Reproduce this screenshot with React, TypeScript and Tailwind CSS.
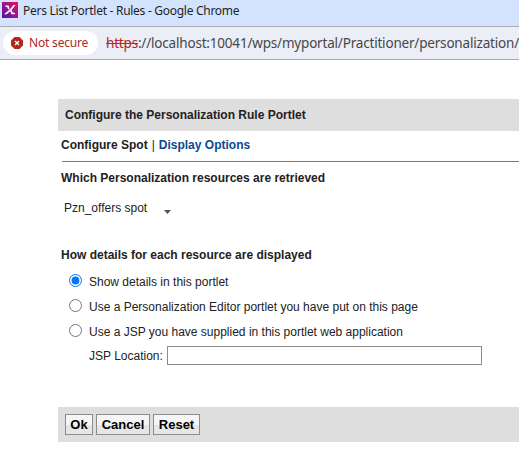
import { useState } from "react";

const displayModes = [
  "Show details in this portlet",
  "Use a Personalization Editor portlet you have put on this page",
  "Use a JSP you have supplied in this portlet web application",
];

function Favicon() {
  return (
    <svg width="16" height="16" viewBox="0 0 16 16" className="shrink-0">
      <defs>
        <linearGradient id="brand" x1="0" y1="1" x2="1" y2="0">
          <stop offset="0" stopColor="#4b15a8" />
          <stop offset="0.5" stopColor="#9a1494" />
          <stop offset="1" stopColor="#f50a55" />
        </linearGradient>
      </defs>
      <rect width="16" height="16" fill="url(#brand)" />
      <path d="M3.5 3.5h3l1.2 3.2-1.5.8-1-2.5H3.5z" fill="#fff" />
      <path d="M13.5 3h-2L7.8 7.4 2 12.2h2.6L9.4 8.2z" fill="#fff" />
      <path d="M8.2 9.2l1.4-1.1 1.2 2.6H13v1.5H9.6z" fill="#fff" />
    </svg>
  );
}

function BrowserChrome() {
  return (
    <header className="font-['Noto_Sans','Open_Sans',sans-serif]">
      <div className="flex h-[27px] items-start gap-[5px] border-b border-[#ababae] bg-[#d3e3fd] pl-0.5 pt-0.5 text-[12px] text-[#1f1f1f]">
        <Favicon />
        <span className="whitespace-nowrap leading-[18px] tracking-[-0.28px]">Pers List Portlet - Rules - Google Chrome</span>
      </div>
      <div className="flex h-[33px] items-center border-b border-[#ababae] bg-[#ebeef7] pl-[3px]">
        <div className="flex h-6 w-[95px] shrink-0 items-center rounded-full bg-white pl-2 text-[12px] text-[#b3261e]">
          <svg width="12" height="12" viewBox="0 0 12 12" className="mr-[6px] shrink-0">
            <path d="M3.6 0h4.8L12 3.6v4.8L8.4 12H3.6L0 8.4V3.6z" fill="#b3261e" />
            <path d="M4 4l4 4M8 4l-4 4" stroke="#fff" strokeWidth="1.3" />
          </svg>
          <span className="whitespace-nowrap tracking-[-0.18px]">Not secure</span>
        </div>
        <div className="ml-2 whitespace-nowrap text-[13.5px] leading-5 tracking-[-0.19px] text-[#474747]">
          <span className="text-[#b3261e] line-through">https</span>
          <span>://localhost:10041/wps/myportal/Practitioner/personalization/</span>
        </div>
      </div>
    </header>
  );
}

export default function App() {
  const [mode, setMode] = useState(0);

  return (
    <div className="h-[452px] w-full overflow-hidden bg-white font-['Liberation_Sans',Arial,sans-serif] text-[12px] leading-4 text-[#222]">
      <BrowserChrome />
      <main className="ml-[58px] pt-[39px]">
        <div className="flex h-8 items-center bg-[#dedede] pl-[7px] font-bold">Configure the Personalization Rule Portlet</div>
        <nav className="ml-[3px] flex h-[30px] items-center gap-1 whitespace-nowrap pb-[2px] font-bold">
          <span>Configure Spot</span>
          <span className="font-normal">|</span>
          <a className="text-[#0b4a91]">Display Options</a>
        </nav>
        <hr className="ml-1 border-t border-[#777]" />
        <section className="ml-[3px] pt-2">
          <h2 className="font-bold">Which Personalization resources are retrieved</h2>
          <button className="ml-[3px] mt-[14px] flex items-center gap-[17px]">
            <span>Pzn_offers spot</span>
            <svg width="7" height="4" viewBox="0 0 7 4" className="mt-2"><path d="M0 0h7L3.5 4z" fill="#555" /></svg>
          </button>
        </section>
        <section className="ml-[3px] pt-[31px]">
          <h2 className="font-bold">How details for each resource are displayed</h2>
          <div className="mt-[6px]">
            {displayModes.map((label, index) => (
              <label key={label} className="flex h-[25px] items-center whitespace-nowrap pl-2">
                <input type="radio" name="mode" className="mb-[3px] mr-[7px] size-[13px]" checked={mode === index} onChange={() => setMode(index)} />
                <span>{label}</span>
              </label>
            ))}
          </div>
          <label className="ml-7 mt-px flex h-5 items-center">
            <span className="w-[78px] shrink-0 whitespace-nowrap pt-0.5">JSP Location:</span>
            <input className="h-[19px] w-[315px] border border-[#8c8c8c] bg-white px-1 outline-none" />
          </label>
        </section>
        <footer className="mt-[42px] flex h-[35px] items-center gap-[3px] bg-[#dedede] pl-[7px] text-[13px] font-bold text-black">
          <button className="h-[21px] w-7 border border-[#8c8c8c] bg-linear-to-b from-[#f5f5f5] from-50% to-[#e6e6e6] to-50%">Ok</button>
          <button className="h-[21px] w-[54px] border border-[#8c8c8c] bg-linear-to-b from-[#f5f5f5] from-50% to-[#e6e6e6] to-50%">Cancel</button>
          <button className="h-[21px] w-[47px] border border-[#8c8c8c] bg-linear-to-b from-[#f5f5f5] from-50% to-[#e6e6e6] to-50%">Reset</button>
        </footer>
      </main>
    </div>
  );
}
